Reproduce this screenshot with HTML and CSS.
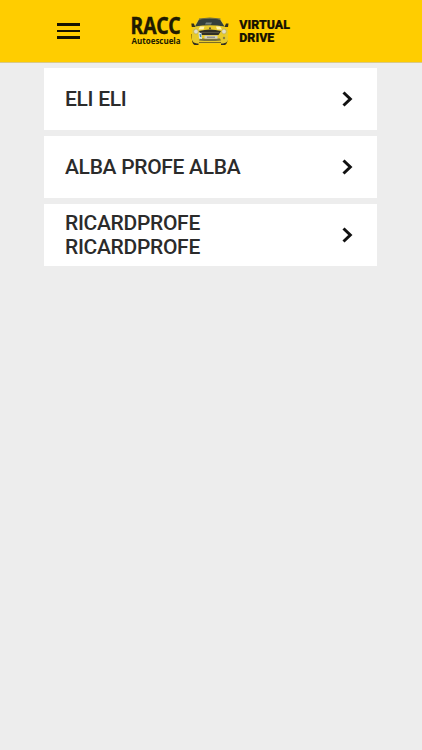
FILE: index.html
```html
<!DOCTYPE html>
<html lang="es">
<head>
<meta charset="utf-8">
<meta name="viewport" content="width=device-width, initial-scale=1">
<title>RACC Autoescuela Virtual Drive</title>
<link rel="stylesheet" href="styles.css">
</head>
<body>
<header class="bar">
  <button class="menu" aria-label="Menú"><span></span><span></span><span></span></button>
  <svg class="brand" viewBox="0 0 164 36" role="img" aria-label="RACC Autoescuela Virtual Drive">
    <text class="racc" x="0.6" y="20" textLength="50" lengthAdjust="spacingAndGlyphs">RACC</text>
    <text class="school" x="1.600" y="29.500" textLength="49" lengthAdjust="spacingAndGlyphs">Autoescuela</text>
    <g>
      <path d="M61.500 20h7v11h-4q-3-1-3-11zM91 20h7q0 10-3 11h-4z" fill="#302d20"/>
      <path d="M63.500 13L68 5q1-1 4-1h15q3 0 4 1l4.500 8 2.500 3V26Q97 29 93 29.500H67Q63 29 62 26V16z" fill="#e8cb2a"/>
      <path d="M65 12.500L69 5.500q11-2.500 21 0l4.500 7Q80 10 65 12.500Z" fill="#34403c"/>
      <path d="M69 5Q80 3 90.500 5" fill="none" stroke="#706b43" stroke-width="1"/>
      <path d="M76 8.500h6l-1 2h-6z" fill="#77837c"/>
      <path d="M61.300 9.500h2.500l1.500 3.500h-3.500zM98.500 9.500H96L94.500 13h3.500z" fill="#34301c"/>
      <path d="M70 12.500l-1.500 3h5l1-3zM86 12.500l1 3h5l-2-3z" fill="#fff4b0"/>
      <path d="M69 17q11-3 22 0l-2.500 4H71z" fill="#302f25"/>
      <path d="M71 18.500h18" stroke="#77725a" stroke-width=".5"/>
      <ellipse cx="66" cy="17.500" rx="2.300" ry="2.500" fill="#e2dfc9" stroke="#b9a63e" stroke-width=".6"/>
      <ellipse cx="94" cy="17.500" rx="2.300" ry="2.500" fill="#e2dfc9" stroke="#b9a63e" stroke-width=".6"/>
      <path d="M70 24.500h20l1 2q-11 1-22 0z" fill="#77703b"/>
      <rect x="74.500" y="21.700" width="13" height="3" fill="#d0d0ca"/>
      <path d="M77 23.200h8" stroke="#77776f" stroke-width="1"/>
      <path d="M68.500 18.500l3 .5.500 6-3-.5z" fill="#dce8e9"/>
      <path d="M69.500 20l1.500.2.500 3-1.500-.2z" fill="#3d83ad"/>
      <circle cx="94" cy="24" r="1.200" fill="#8a8040"/>
      <path d="M69 28.500h22" stroke="#7b6c24" stroke-width="1"/>
      <circle cx="80" cy="14.300" r="1" fill="#55513b"/>
    </g>
    <text class="virtual" x="109.300" y="15.200" textLength="50.700" lengthAdjust="spacingAndGlyphs">VIRTUAL</text>
    <text class="virtual" x="109.300" y="28" textLength="35" lengthAdjust="spacingAndGlyphs">DRIVE</text>
  </svg>
</header>
<main class="list">
  <a class="card"><span>ELI ELI</span><svg class="chevron" viewBox="0 0 12 16"><path d="M1.500 1.500L8.300 8l-6.800 6.500"/></svg></a>
  <a class="card"><span>ALBA PROFE ALBA</span><svg class="chevron" viewBox="0 0 12 16"><path d="M1.500 1.500L8.300 8l-6.800 6.500"/></svg></a>
  <a class="card"><span>RICARDPROFE RICARDPROFE</span><svg class="chevron" viewBox="0 0 12 16"><path d="M1.500 1.500L8.300 8l-6.800 6.500"/></svg></a>
</main>
</body>
</html>
```
FILE: styles.css
```css
* { box-sizing: border-box; }
body {
  margin: 0;
  min-height: 100vh;
  background: #ededed;
  font-family: Roboto, "Liberation Sans", sans-serif;
}
.bar {
  display: flex;
  height: 63px;
  padding: 14px 0 0 57px;
  background: #ffcd00;
  border-bottom: 1px solid #d9c987;
}
.menu {
  display: flex;
  flex-direction: column;
  gap: 4px;
  width: 23px;
  height: 17px;
  margin: 9px 50px 0 0;
  padding: 0;
  border: 0;
  background: none;
}
.menu span { width: 23px; height: 2.500px; flex: none; background: #171300; }
.brand { width: 164px; height: 36px; overflow: visible; }
.brand text { fill: #211b00; }
.racc { font: 700 23px "Noto Sans", sans-serif; stroke: #211b00; stroke-width: .4px; }
.school { font: 700 9.300px "Open Sans", sans-serif; }
.brand .virtual { font: 900 12px Roboto, sans-serif; fill: #171300; stroke: #171300; stroke-width: .2px; }
.list {
  display: flex;
  flex-direction: column;
  gap: 6.500px;
  padding: 5px 45px 0 44px;
}
.card {
  display: flex;
  align-items: center;
  justify-content: space-between;
  height: 61.500px;
  padding: 0 23.500px 0 21px;
  background: #fff;
  color: #2b2b2b;
  font-size: 21px;
  font-weight: 500;
  letter-spacing: -.3px;
  line-height: 24px;
}
.card span { width: 200px; }
.chevron { width: 12px; height: 16px; fill: none; stroke: #111; stroke-width: 3; }
```
